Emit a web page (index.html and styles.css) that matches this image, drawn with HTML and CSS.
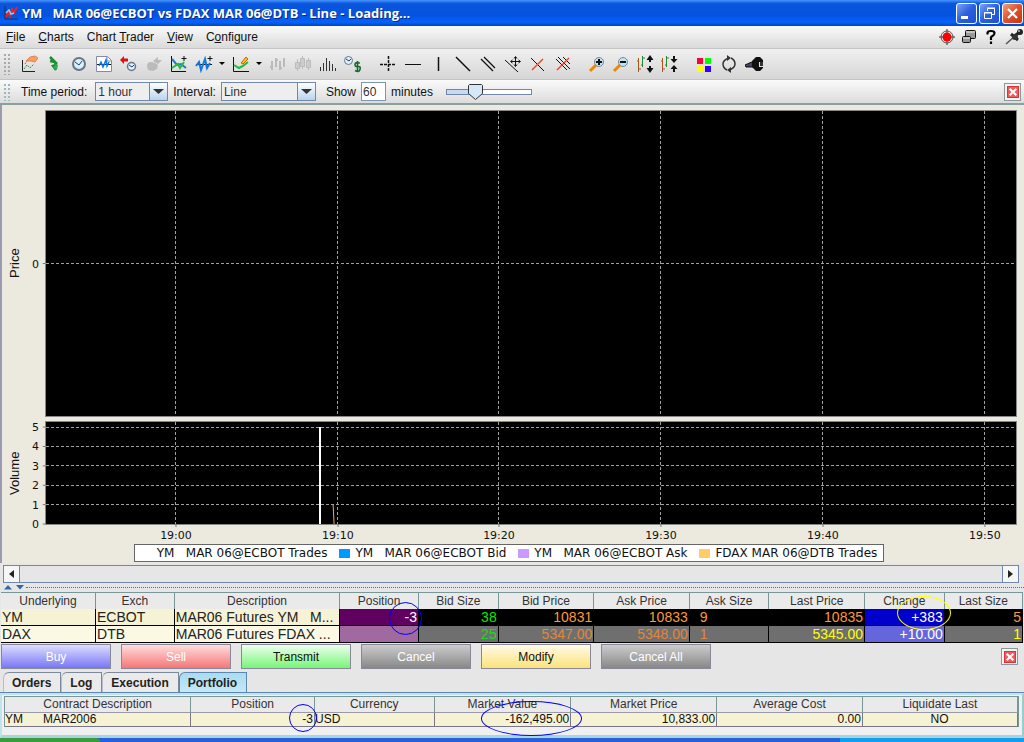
FILE: index.html
```html
<!DOCTYPE html>
<html lang="en">
<head>
<meta charset="utf-8">
<title>YM MAR 06@ECBOT vs FDAX MAR 06@DTB - Line</title>
<link rel="stylesheet" href="styles.css">
</head>
<body>
<div class="window">
  <header class="titlebar">
    <svg class="app-icon" width="16" height="16" viewBox="0 0 16 16" fill="none"><path d="M2 1v13h13" stroke="#234"/><path d="M3 12l2-5 2 4 2-7 2 4 3-6" stroke="#e22" stroke-width="2"/><path d="M3 8l3-3 2 4 3-1" stroke="#8cf" stroke-width="1.5"/></svg>
    <h1 class="title">YM &nbsp; MAR 06@ECBOT vs FDAX MAR 06@DTB - Line - Loading...</h1>
    <div class="win-buttons">
      <button class="win-btn" aria-label="Minimize"><svg width="17" height="17" viewBox="0 0 17 17"><path d="M3 11h7v3H3z" fill="#fff"/></svg></button>
      <button class="win-btn" aria-label="Restore"><svg width="17" height="17" viewBox="0 0 17 17" fill="none" stroke="#fff"><path d="M6.500 6V3.500h7v6H11M6 3h8" /><path d="M3.500 7.500h7v6h-7zM3 8h8"/></svg></button>
      <button class="win-btn win-close" aria-label="Close"><svg width="17" height="17" viewBox="0 0 17 17"><path d="M4 4l9 9M13 4l-9 9" stroke="#fff" stroke-width="2.200"/></svg></button>
    </div>
  </header>

  <nav class="menubar">
    <button class="menu"><u>F</u>ile</button>
    <button class="menu"><u>C</u>harts</button>
    <button class="menu">Chart <u>T</u>rader</button>
    <button class="menu"><u>V</u>iew</button>
    <button class="menu">C<u>o</u>nfigure</button>
    <div class="menu-icons">
      <button class="icon" aria-label="Status"><svg width="16" height="16" viewBox="0 0 16 16"><path d="M8 0v16M0 8h16" stroke="#333"/><circle cx="8" cy="8" r="6" fill="none" stroke="#555"/><circle cx="8" cy="8" r="4.500" fill="#f00"/></svg></button>
      <button class="icon" aria-label="Windows"><svg width="16" height="16" viewBox="0 0 16 16" fill="#999" stroke="#111"><rect x="4.500" y="1.500" width="10" height="8" rx="1"/><path d="M5 3h9" stroke="#eee"/><rect x="1.500" y="7.500" width="8" height="6" rx="1"/><path d="M2 9h7" stroke="#eee"/></svg></button>
      <button class="icon" aria-label="Help"><svg width="16" height="16" viewBox="0 0 16 16" fill="none" stroke="#000" stroke-width="2.200"><path d="M4.500 5.500V4q0-2 3.500-2t3.500 2q0 2-2 3T8 9.500V11M8 12.500V15"/></svg></button>
      <button class="icon" aria-label="Pin"><svg width="18" height="16" viewBox="0 0 18 16"><path d="M1 15l9-8" stroke="#555" stroke-width="1.500"/><path d="M6 5l7 6M8 8l7-5" stroke="#222" stroke-width="3"/><circle cx="10" cy="8" r="3" fill="#333"/><circle cx="15" cy="3" r="3" fill="#222"/><circle cx="14" cy="2" r="1" fill="#bbb"/></svg></button>
    </div>
  </nav>

  <div class="toolbar">
    <span class="grip"></span>
    <button class="icon" aria-label="New chart"><svg width="18" height="18" viewBox="0 0 18 18" fill="none"><path d="M2.500 5v11.500H15" stroke="#222"/><path d="M4 14l3-4 3 3 4-4" stroke="#393" stroke-dasharray="2 1"/><path d="M5 9l2-3" stroke="#c22" stroke-dasharray="1 1"/><path d="M6 6l4-4 5-1 3 2-3 4-4-1z" fill="#f5a15c" stroke="#d85"/></svg></button>
    <button class="icon" aria-label="Snake"><svg width="18" height="18" viewBox="0 0 18 18" fill="none"><path d="M5 2l7 7M5 6l5 1 1 3-3 1 3 4" stroke="#1d8d35" stroke-width="2.500"/><path d="M11 9l2 1-1 5-4-2" fill="#3a5"/></svg></button>
    <button class="icon" aria-label="Time"><svg width="18" height="18" viewBox="0 0 18 18"><circle cx="9" cy="9" r="6" fill="#d8f0fa" stroke="#678" stroke-width="2"/><path d="M5 7l4 3 3-4" fill="none" stroke="#246"/></svg></button>
    <button class="icon" aria-label="Chart page"><svg width="18" height="18" viewBox="0 0 18 18" fill="none"><path d="M1.500 1.500h11l4 4v11h-15z" fill="#fff" stroke="#88a"/><path d="M12 2v4h4" stroke="#88a"/><path d="M2 9.500h14" stroke="#113"/><path d="M4 11l2-4 2 5 3-7 1 6 2-4" stroke="#17d" stroke-width="1.500"/></svg></button>
    <button class="icon" aria-label="Back in time"><svg width="18" height="18" viewBox="0 0 18 18"><path d="M0 5l4-4v2.500h4v3H4V9z" fill="#d11"/><circle cx="11.500" cy="11.500" r="4" fill="#def" stroke="#678" stroke-width="1.500"/><path d="M9 10l3 2 2-2" fill="none" stroke="#246"/></svg></button>
    <button class="icon" aria-label="Unavailable tool"><svg width="18" height="18" viewBox="0 0 18 18" fill="#bbb"><path d="M8 6l5-4v3h4l-4 4zM2 11q0-4 4-4t7 3l-1 4-4 2-5-1z"/></svg></button>
    <button class="icon" aria-label="Add study"><svg width="18" height="18" viewBox="0 0 18 18" fill="none"><path d="M1.500 1v15.500H16M14 1v5M11.500 3.500h5" stroke="#111"/><path d="M2 4l5 6 4-1 5 4" stroke="#27c" stroke-width="2"/><path d="M2 13l6-4 2 4 4-6" stroke="#2b4" stroke-width="2"/></svg></button>
    <button class="icon" aria-label="Add indicator"><svg width="18" height="18" viewBox="0 0 18 18" fill="none"><path d="M15 1v5M12.500 3.500h5M1 9.500h16" stroke="#111"/><path d="M1 11l3-4 2 8 4-11 2 9 3-5" stroke="#17d" stroke-width="2"/></svg></button>
    <button class="icon icon-drop" aria-label="More indicators"><svg width="6" height="4" viewBox="0 0 6 4"><path d="M0 0h6L3 3z"/></svg></button>
    <button class="icon" aria-label="Draw"><svg width="18" height="18" viewBox="0 0 18 18" fill="none"><path d="M1.500 2v14.500H17" stroke="#111"/><path d="M2 10l5 3 4-2 5-4" stroke="#2b3" stroke-width="2"/><path d="M9 8l5-6 2 2-5 5z" fill="#fb3" stroke="#c60"/></svg></button>
    <button class="icon icon-drop" aria-label="More drawings"><svg width="6" height="4" viewBox="0 0 6 4"><path d="M0 0h6L3 3z"/></svg></button>
    <button class="icon" aria-label="Bars"><svg width="18" height="18" viewBox="0 0 18 18" fill="none" stroke="#bbb" stroke-width="2"><path d="M3 6v9M7 3v9M11 6v9M15 3v9M1 12h2M7 5h2M11 13h2"/></svg></button>
    <button class="icon" aria-label="Candles"><svg width="18" height="18" viewBox="0 0 18 18" fill="#ccc" stroke="#bbb"><path d="M3.500 4v12M8.500 1v13M14.500 3v12"/><path d="M1.500 7.500h4v6h-4zM6.500 3.500h4v8h-4zM12.500 5.500h4v7h-4z"/></svg></button>
    <button class="icon" aria-label="Volume"><svg width="18" height="18" viewBox="0 0 18 18" stroke="#333"><path d="M1.500 12v4M4.500 8v8M7.500 3v13M10.500 6v10M13.500 9v7M16.500 13v3"/></svg></button>
    <button class="icon" aria-label="Time and sales"><svg width="18" height="18" viewBox="0 0 18 18" fill="none"><circle cx="4.500" cy="5.500" r="4" fill="#def" stroke="#678"/><path d="M2 4l3 2 2-2" stroke="#246"/><path d="M16 8q-5-1-5 1.500t3 2 2 3-5 1M13.500 6v11" stroke="#176b28" stroke-width="1.600"/></svg></button>
    <span class="gap"></span>
    <button class="icon" aria-label="Crosshair"><svg width="18" height="18" viewBox="0 0 18 18" stroke="#111"><path d="M9.500 1v16M1 9.500h16" stroke-width="1.500" stroke-dasharray="3 1"/></svg></button>
    <button class="icon" aria-label="Horizontal line"><svg width="18" height="18" viewBox="0 0 18 18" stroke="#111"><path d="M1 9.500h16"/></svg></button>
    <button class="icon" aria-label="Vertical line"><svg width="18" height="18" viewBox="0 0 18 18" stroke="#111"><path d="M9.500 2v14" stroke-width="1.500"/></svg></button>
    <button class="icon" aria-label="Trend line"><svg width="18" height="18" viewBox="0 0 18 18" stroke="#111"><path d="M2 2l14 14" stroke-width="1.500"/></svg></button>
    <button class="icon" aria-label="Parallel lines"><svg width="18" height="18" viewBox="0 0 18 18" stroke="#111"><path d="M2 4l12 12M5 2l11 11" stroke-width="1.300"/></svg></button>
    <button class="icon" aria-label="Move line"><svg width="18" height="18" viewBox="0 0 18 18" stroke="#111" fill="none"><path d="M1 5l13 12M11.500 2v9M7 6.500h9M10 3.500l1.500-2 1.500 2M10 9.500l1.500 2 1.500-2M8.500 5l-2 1.500 2 1.500M14.500 5l2 1.500-2 1.500"/></svg></button>
    <button class="icon" aria-label="Delete line"><svg width="18" height="18" viewBox="0 0 18 18"><path d="M2 3l13 13" stroke="#111"/><path d="M14 4L3 15" stroke="#e42" stroke-width="1.500"/></svg></button>
    <button class="icon" aria-label="Delete all lines"><svg width="18" height="18" viewBox="0 0 18 18"><path d="M2 4l11 11M4 2l12 12M9 2l7 7" stroke="#111"/><path d="M15 3L3 15" stroke="#e42" stroke-width="1.500"/></svg></button>
    <span class="gap"></span>
    <button class="icon icon-slim" aria-label="Zoom in"><svg width="18" height="18" viewBox="0 0 18 18"><path d="M2 16l6-6" stroke="#e80" stroke-width="3"/><circle cx="11" cy="7" r="4.500" fill="#bfe4f2" stroke="#789"/><path d="M8 7h6M11 4v6" stroke="#111" stroke-width="2"/></svg></button>
    <button class="icon icon-slim" aria-label="Zoom out"><svg width="18" height="18" viewBox="0 0 18 18"><path d="M2 16l6-6" stroke="#e80" stroke-width="3"/><circle cx="11" cy="7" r="4.500" fill="#bfe4f2" stroke="#789"/><path d="M8 7h6" stroke="#111" stroke-width="2"/></svg></button>
    <button class="icon icon-slim" aria-label="Expand range"><svg width="18" height="18" viewBox="0 0 18 18" fill="none"><path d="M2.500 3v14M1 6h1M3 14h2" stroke="#a52"/><path d="M6.500 1v11M5 10h1M7 3h2" stroke="#283"/><path d="M14 3v4M14 11v4" stroke="#111" stroke-width="2"/><path d="M10.500 5L14 0l3.500 5zM10.500 13l3.500 5 3.500-5z" fill="#111"/></svg></button>
    <button class="icon icon-slim" aria-label="Shrink range"><svg width="18" height="18" viewBox="0 0 18 18" fill="none"><path d="M2.500 3v14M1 6h1M3 14h2" stroke="#a52"/><path d="M6.500 1v11M5 10h1M7 3h2" stroke="#283"/><path d="M14 1v4M14 13v4" stroke="#111" stroke-width="2"/><path d="M10.500 4l3.500 4 3.500-4zM10.500 14l3.500-4 3.500 4z" fill="#111"/></svg></button>
    <span class="gap"></span>
    <button class="icon" aria-label="Colors"><svg width="18" height="18" viewBox="0 0 18 18"><path d="M2 3h6v6H2z" fill="#f03"/><path d="M10 3h6v6h-6z" fill="#0f0"/><path d="M2 11h6v6H2z" fill="#ff0"/><path d="M10 11h6v6h-6z" fill="#30f"/></svg></button>
    <button class="icon" aria-label="Refresh"><svg width="18" height="18" viewBox="0 0 18 18" fill="none" stroke="#333" stroke-width="1.500"><path d="M7 15q-4-2-4-6t6-6M11 3q4 2 4 6t-6 6"/><path d="M7 0l4 3-4 3zM11 12l-4 3 4 3z" fill="#333" stroke="none"/></svg></button>
    <button class="icon" aria-label="Settings"><svg width="18" height="18" viewBox="0 0 18 18"><path d="M0 10l9-4v6H1z" fill="#446" stroke="#111"/><path d="M11 2h4l3 3v2h-4v5h4v1l-3 3h-4l-4-4V6z" fill="#111"/><path d="M15 7h3v4h-3z" fill="#333"/></svg></button>
  </div>

  <form class="periodbar">
    <span class="grip grip-blue"></span>
    <label for="period">Time period:</label>
    <span class="combo combo-period"><select id="period"><option>1 hour</option></select><svg width="17" height="17" viewBox="0 0 17 17"><path d="M3 6h11l-5.500 5z" fill="#333"/></svg></span>
    <label for="interval">Interval:</label>
    <span class="combo combo-interval"><select id="interval"><option>Line</option></select><svg width="17" height="17" viewBox="0 0 17 17"><path d="M3 6h11l-5.500 5z" fill="#333"/></svg></span>
    <label class="show" for="minutes">Show</label>
    <input class="minutes" id="minutes" type="text" value="60">
    <label for="range">minutes</label>
    <input class="slider" id="range" type="range" min="0" max="100" value="31">
    <button class="close-btn" type="button" aria-label="Close bar"><svg width="12" height="12" viewBox="0 0 12 12"><path d="M2 2l8 8M10 2l-8 8" stroke="#fff" stroke-width="2.500"/></svg></button>
  </form>

  <main class="chart">
    <div class="axis axis-price"><span class="axis-name">Price</span>
      <svg class="ticks"><text x="100%" dx="-7" y="50%" dy="4">0</text><line x1="100%" x2="82%" y1="50%" y2="50%"/></svg></div>
    <svg class="plot plot-price">
      <g class="grid"><line x1="0" x2="100%" y1="50%" y2="50%"/>
      <line x1="13.4%" x2="13.4%" y1="0" y2="100%"/><line x1="30.1%" x2="30.1%" y1="0" y2="100%"/><line x1="46.7%" x2="46.7%" y1="0" y2="100%"/><line x1="63.4%" x2="63.4%" y1="0" y2="100%"/><line x1="80.100%" x2="80.100%" y1="0" y2="100%"/><line x1="96.800%" x2="96.800%" y1="0" y2="100%"/></g>
    </svg>
    <div class="axis"><span class="axis-name">Volume</span>
      <svg class="ticks"><text x="100%" dx="-7" y="5%" dy="4">5</text><text x="100%" dx="-7" y="24%" dy="4">4</text><text x="100%" dx="-7" y="43%" dy="4">3</text><text x="100%" dx="-7" y="62%" dy="4">2</text><text x="100%" dx="-7" y="81%" dy="4">1</text><text x="100%" dx="-7" y="100%" dy="4">0</text>
      <line x1="100%" x2="82%" y1="5%" y2="5%"/><line x1="100%" x2="82%" y1="24%" y2="24%"/><line x1="100%" x2="82%" y1="43%" y2="43%"/><line x1="100%" x2="82%" y1="62%" y2="62%"/><line x1="100%" x2="82%" y1="81%" y2="81%"/><line x1="100%" x2="82%" y1="100%" y2="100%"/></svg></div>
    <svg class="plot">
      <g class="grid"><line x1="0" x2="100%" y1="5%" y2="5%"/><line x1="0" x2="100%" y1="24%" y2="24%"/><line x1="0" x2="100%" y1="43%" y2="43%"/><line x1="0" x2="100%" y1="62%" y2="62%"/><line x1="0" x2="100%" y1="81%" y2="81%"/>
      <line x1="13.4%" x2="13.4%" y1="0" y2="100%"/><line x1="30.1%" x2="30.1%" y1="0" y2="100%"/><line x1="46.7%" x2="46.7%" y1="0" y2="100%"/><line x1="63.4%" x2="63.4%" y1="0" y2="100%"/><line x1="80.100%" x2="80.100%" y1="0" y2="100%"/><line x1="96.800%" x2="96.800%" y1="0" y2="100%"/></g>
      <line class="bar-ym" x1="28.2%" x2="28.2%" y1="5%" y2="100%"/><line class="bar-dax" x1="29.6%" x2="29.7%" y1="81%" y2="100%"/>
    </svg>
    <svg class="times"><text x="13.4%" y="15">19:00</text><text x="30.1%" y="15">19:10</text><text x="46.7%" y="15">19:20</text><text x="63.4%" y="15">19:30</text><text x="80.100%" y="15">19:40</text><text x="96.800%" y="15">19:50</text>
      <line x1="13.4%" x2="13.4%" y1="0" y2="3"/><line x1="30.1%" x2="30.1%" y1="0" y2="3"/><line x1="46.7%" x2="46.7%" y1="0" y2="3"/><line x1="63.4%" x2="63.4%" y1="0" y2="3"/><line x1="80.100%" x2="80.100%" y1="0" y2="3"/><line x1="96.800%" x2="96.800%" y1="0" y2="3"/></svg>
    <div class="legend">
      <span class="key key-trades">YM &nbsp; MAR 06@ECBOT Trades</span>
      <span class="key key-bid">YM &nbsp; MAR 06@ECBOT Bid</span>
      <span class="key key-ask">YM &nbsp; MAR 06@ECBOT Ask</span>
      <span class="key key-dax">FDAX MAR 06@DTB Trades</span>
    </div>
  </main>

  <div class="scrollbar">
    <button aria-label="Scroll left"><svg width="5" height="8" viewBox="0 0 5 8"><path d="M5 0v8L0 4z" fill="#222"/></svg></button>
    <span class="track"></span>
    <button aria-label="Scroll right"><svg width="5" height="8" viewBox="0 0 5 8"><path d="M0 0v8l5-4z" fill="#222"/></svg></button>
  </div>
  <div class="splitter"><svg width="22" height="5" viewBox="0 0 22 5"><path d="M0 4.500L4 0l4 4.500zM12 0h8l-4 4.500z" fill="#36a"/></svg></div>

  <table class="quotes">
    <thead><tr><th class="w-sym">Underlying</th><th class="w-exch">Exch</th><th class="w-desc">Description</th><th class="w-pos">Position</th><th class="w-size">Bid Size</th><th class="w-price">Bid Price</th><th class="w-price">Ask Price</th><th class="w-size">Ask Size</th><th class="w-price">Last Price</th><th class="w-size">Change</th><th class="w-last">Last Size</th></tr></thead>
    <tbody>
      <tr><td class="name">YM</td><td class="name">ECBOT</td><td class="name">MAR06 Futures YM &nbsp; M...</td><td class="pos">-3<i class="ring ring-pos"></i></td><td class="green">38</td><td>10831</td><td>10833</td><td class="left">9</td><td>10835</td><td class="chg">+383<i class="ring ring-chg"></i></td><td>5</td></tr>
      <tr class="stale"><td class="name">DAX</td><td class="name">DTB</td><td class="name">MAR06 Futures FDAX ...</td><td class="pos"></td><td class="green">25</td><td>5347.00</td><td>5348.00</td><td class="left">1</td><td class="yellow">5345.00</td><td class="chg">+10.00</td><td class="yellow">1</td></tr>
    </tbody>
  </table>

  <div class="actions">
    <button class="action buy">Buy</button>
    <button class="action sell">Sell</button>
    <button class="action transmit">Transmit</button>
    <button class="action gray">Cancel</button>
    <button class="action modify">Modify</button>
    <button class="action gray">Cancel All</button>
    <button class="close-btn" aria-label="Close panel"><svg width="12" height="12" viewBox="0 0 12 12"><path d="M2 2l8 8M10 2l-8 8" stroke="#fff" stroke-width="2.500"/></svg></button>
  </div>

  <div class="tabs">
    <button class="tab">Orders</button><button class="tab">Log</button><button class="tab">Execution</button><button class="tab tab-on">Portfolio</button>
  </div>

  <section class="portfolio">
    <table class="holdings">
      <thead><tr><th class="h-desc">Contract Description</th><th class="h-pos">Position</th><th class="h-cur">Currency</th><th class="h-val">Market Value</th><th class="h-num">Market Price</th><th class="h-num">Average Cost</th><th>Liquidate Last</th></tr></thead>
      <tbody><tr><td class="left">YM &nbsp; &nbsp; &nbsp;MAR2006</td><td>-3<i class="ring ring-hold"></i></td><td class="left">USD</td><td>-162,495.00<i class="ring ring-val"></i></td><td>10,833.00</td><td>0.00</td><td class="center">NO</td></tr></tbody>
    </table>
  </section>
  <footer class="taskbar"><span class="start"></span><span class="tray"></span></footer>
</div>
</body>
</html>
```
FILE: styles.css
```css
* { box-sizing: border-box; }
body { margin: 0; font: 12px/16px "Liberation Sans", Arial, sans-serif; color: #111; background: #e6e6e6; }
button { font: inherit; color: inherit; padding: 0; border: 0; background: none; }
.window { display: flex; flex-direction: column; height: 100vh; min-height: 560px; }
.window > * { flex-shrink: 0; }

/* Title and menus */
.titlebar { display: flex; align-items: center; height: 26px; padding: 0 1px 0 3px; background: linear-gradient(#4795ff, #0a55dd 14%, #0453e0 60%, #0663fb 85%, #0145c4); }
.title { flex: 1; margin: 0 0 0 3px; font: bold 13px/18px "Open Sans", sans-serif; color: #fff; text-shadow: 1px 1px 0 #0a2a80; white-space: nowrap; }
.win-buttons { display: flex; gap: 2px; }
.win-btn { width: 21px; height: 21px; display: grid; place-items: center; border: 1px solid #fff; border-radius: 3px; background: linear-gradient(135deg, #7ba2f5, #2a5fdd 50%, #1c50d2); }
.win-close { background: linear-gradient(135deg, #f0a080, #e0502a 50%, #c8350e); }
.menubar { display: flex; align-items: center; gap: 13px; height: 23px; padding: 0 1px 0 6px; border-bottom: 1px solid #c4c4c4; background: linear-gradient(#fafafa, #dadada); }
.menu { font-size: 12px; }
.menu-icons { display: flex; gap: 6px; margin-left: auto; }
.icon { display: grid; place-items: center; }
.icon svg, .win-btn svg, .close-btn svg { display: block; }

/* Tool bars */
.toolbar { display: flex; align-items: center; height: 31px; border-bottom: 1px solid #c4c4c4; background: linear-gradient(#f0f0f0, #d6d6d6); }
.toolbar .icon { width: 25px; height: 25px; }
.toolbar .icon-drop { width: 12px; }
.toolbar .icon-slim { width: 24px; }
.gap { width: 10px; }
.grip { width: 9px; height: 22px; margin: 0 4px 0 3px; background: radial-gradient(circle, #aaa 1px, transparent 1px) 0 0 / 4px 4px; }
.grip-blue { height: 18px; background-image: radial-gradient(circle, #9bb 1px, transparent 1px); }
.periodbar { display: flex; align-items: center; gap: 5px; height: 25px; padding-right: 3px; border-bottom: 2px solid #8aa0a0; background: linear-gradient(#fafafa, #dcdcdc); }
.combo { display: grid; border: 1px solid #7188ab; background: #eee; }
.combo select { grid-area: 1 / 1; height: 17px; padding: 0 20px 0 2px; border: 0; appearance: none; background: none; font: inherit; color: #333; }
.combo svg { grid-area: 1 / 1; justify-self: end; width: 18px; border-left: 1px solid #7188ab; background: linear-gradient(#fff, #b8d4ee); pointer-events: none; }
.combo-period { width: 73px; margin-left: 3px; }
.combo-interval { width: 95px; }
.show { margin-left: 5px; }
.minutes { width: 25px; height: 19px; padding: 0 1px; border: 1px solid #7a97b0; background: #fff; font: inherit; color: #333; }
.slider { width: 86px; height: 18px; margin: 0 0 0 8px; appearance: none; background: none; }
.slider::-webkit-slider-runnable-track { height: 6px; border: 1px solid #7188ab; background: linear-gradient(90deg, #c4dcf2 28%, #fff 28%); }
.slider::-webkit-slider-thumb { appearance: none; width: 15px; height: 16px; margin-top: -6px; background: url("data:image/svg+xml,%3Csvg xmlns='http://www.w3.org/2000/svg' width='15' height='16'%3E%3Cpath d='M1.500 .5h12l1 1v8l-7 6-7-6v-8z' fill='%23d4e8f8' stroke='%23333'/%3E%3C/svg%3E"); }
.close-btn { display: grid; place-items: center; width: 17px; height: 18px; margin-left: auto; border: 1px solid #8a9a9a; background: #f4f4f4; }
.close-btn svg { background: #f15a5a; border: 1px solid #d33; }

/* Chart */
.window > .chart { flex: 1 1 0; min-height: 0; display: grid; grid-template-columns: 44px 1fr; grid-template-rows: minmax(0, 1fr) 102px 20px 18px; padding: 6px 8px 1px 0; border-left: 2px solid #9a9ab0; background: #ece9df; }
.axis { display: flex; min-height: 0; }
.axis-name { width: 26px; writing-mode: vertical-rl; transform: rotate(180deg); text-align: center; font-size: 13px; line-height: 26px; }
.ticks { width: 18px; height: 100%; overflow: visible; }
.ticks text { text-anchor: end; }
.ticks text, .times text { font: 11px "DejaVu Sans", sans-serif; fill: #111; }
.ticks line, .times line { stroke: #777; }
.plot { width: 100%; height: 100%; min-height: 0; background: #000; outline: 1px solid #888; }
.axis-price, .plot-price { height: calc(100% - 6px); }
.grid line { stroke: #a0a0a0; stroke-dasharray: 3 2; shape-rendering: crispEdges; }
.bar-ym { stroke: #fff; stroke-width: 2; shape-rendering: crispEdges; }
.bar-dax { stroke: #f0b040; }
.times { grid-column: 2; width: 100%; height: 20px; overflow: visible; }
.times text { text-anchor: middle; }
.legend { grid-column: 1 / 3; justify-self: center; display: flex; gap: 12px; padding: 0 6px; border: 1px solid #666; background: #fff; font: 12px/16px "DejaVu Sans", sans-serif; white-space: nowrap; }
.key { display: flex; align-items: center; gap: 5px; }
.key::before { content: ""; width: 11px; height: 9px; }
.key-trades::before { background: #fff; }
.key-bid::before { background: #09f; }
.key-ask::before { background: #c9f; }
.key-dax::before { background: #fc6; }
.scrollbar { display: flex; height: 18px; margin: 2px 5px 0 3px; border: 1px solid #7188ab; background: #e6e6e6; }
.scrollbar button { width: 15px; display: grid; place-items: center; background: #f6f6f6; }
.track { flex: 1; border: solid #7188ab; border-width: 0 1px; }
.splitter { display: flex; align-items: center; height: 9px; padding-left: 4px; }
.splitter::after { content: ""; flex: 1; border-top: 1px dotted #669; }

/* Quotes */
table { border-collapse: separate; border-spacing: 0; table-layout: fixed; }
th { padding: 0; font-weight: normal; color: #333; text-align: center; white-space: nowrap; }
td { position: relative; white-space: nowrap; text-align: right; }
.quotes { width: calc(100% - 2px); margin-left: 1px; border-top: 1px solid #7a9797; }
.quotes th { height: 16px; line-height: 15px; border-right: 1px solid #7a9797; background: #eaeaea; }
.quotes td { height: 17px; padding: 0 1px 0 1px; border-right: 1px solid #000; border-bottom: 1px solid #000; font-size: 14px; line-height: 16px; color: #f93; background: #000; }
.quotes .left { text-align: left; padding-left: 10px; }
.quotes .name { color: #222; text-align: left; background: #f6f2d4; }
.quotes .pos { color: #fff; background: #600060; }
.quotes .chg { color: #fff; background: #00c; }
.quotes .green { color: #0e0; }
.quotes .stale td { color: #e0883a; background: #6f6f6f; }
.quotes .stale .name { color: #222; background: #fbf8e4; }
.quotes .stale .pos { background: #a06aa0; }
.quotes .stale .chg { color: #fff; background: #6666dc; }
.quotes .stale .green { color: #1d2; }
.quotes .stale .yellow { color: #ff0; }
.w-sym { width: 9.3%; }
.w-exch, .w-pos { width: 7.7%; }
.w-desc { width: 16.2%; }
.w-size { width: 7.8%; }
.w-price { width: 9.350%; }
.ring { position: absolute; z-index: 1; border: 1px solid #00f; border-radius: 50%; }
.ring-pos { top: -7px; right: -4px; width: 33px; height: 33px; }
.ring-chg { top: -13px; right: -7px; width: 54px; height: 34px; border-color: #ff0; }

/* Order buttons and tabs */
.actions { display: flex; align-items: center; gap: 10px; padding: 1px 6px 0 1px; }
.action { width: 110px; height: 25px; border: 1px solid #889; color: #fff; }
.actions .close-btn { width: 17px; height: 17px; }
.buy { background: linear-gradient(#ddf, #7777f5); }
.sell { background: linear-gradient(#fdd, #f57777); }
.transmit { color: #111; background: linear-gradient(#efe, #77f577); }
.gray { background: linear-gradient(#ccc, #888); }
.modify { color: #111; background: linear-gradient(#fffbe8, #fbe27a); }
.tabs { display: flex; padding: 3px 0 0 3px; border-bottom: 1px solid #5f86b0; }
.tab { height: 20px; padding: 0 9px 0 8px; border: 1px solid #7a8a9a; border-width: 1px 1px 0 1px; border-left-color: #bbc; border-top-left-radius: 6px; font-weight: bold; color: #222; background: #eaeaea; }
.tab-on { border-color: #5f86b0; background: linear-gradient(#a8dcf0, #c4e8f6); }

/* Portfolio */
.portfolio { padding: 1px 3px 8px 2px; border: 2px solid #bfe4ee; border-right-color: #9cc; border-bottom: 3px solid #a8d4e0; background: #f0f0f0; }
.holdings { width: 100%; border: solid #7a9797; border-width: 1px 1px 0; }
.holdings th { height: 16px; line-height: 15px; border-right: 1px solid #7a9797; border-bottom: 1px solid #99a; background: #eaeaea; }
.holdings td { height: 14px; padding: 0 1px 0 0; line-height: 13px; border-right: 1px solid #778; border-bottom: 1px solid #778; background: #f6f2d4; }
.holdings .left { text-align: left; }
.holdings .center { text-align: center; }
.h-desc { width: 18.4%; }
.h-pos { width: 12.2%; }
.h-cur { width: 11.8%; }
.h-val { width: 13.5%; }
.h-num { width: 14.4%; }
.ring-hold { top: -9px; right: -3px; width: 28px; height: 28px; }
.ring-val { top: -12px; right: -12px; width: 101px; height: 35px; }
.taskbar { display: flex; justify-content: space-between; height: 4px; background: #2560dd; }
.start { width: 100px; background: #3a9c3a; border-top-right-radius: 4px; }
.tray { width: 18%; background: #11a0f0; }
```
